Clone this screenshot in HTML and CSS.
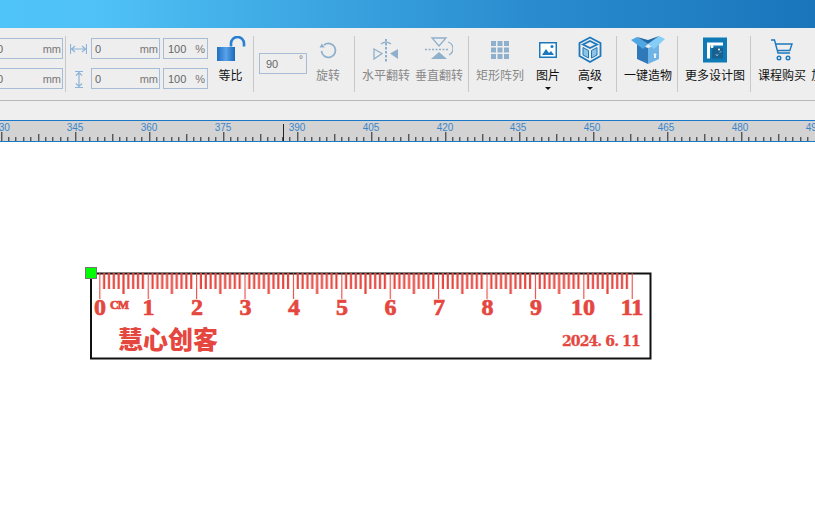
FILE: index.html
```html
<!DOCTYPE html>
<html lang="zh-CN">
<head>
  <meta charset="UTF-8" />
  <title>激光造物</title>
  <link rel="stylesheet" href="styles.css">
</head>
<body>
  <div class="titlebar"></div>

  <div class="toolbar">
    <div class="size-cut">
      <div class="field w-size"><span>0</span><span class="unit">mm</span></div>
      <div class="field w-size"><span>0</span><span class="unit">mm</span></div>
    </div>
    <div class="sep first"></div>

    <div class="axis">
      <svg width="17" height="12" viewBox="0 0 17 12" fill="none" stroke="#8db4d8" stroke-width="1.200"><path d="M.5 1v10M16.500 1v10M1 6h15M5 3 1.500 6 5 9M12 3l3.500 3L12 9"/></svg>
      <svg width="10" height="17" viewBox="0 0 10 17" fill="none" stroke="#8db4d8" stroke-width="1.200"><path d="M1 .5h8M1 16.500h8M5 1v15M2 4.500 5 1.500l3 3M2 12.500l3 3 3-3"/></svg>
    </div>
    <div class="field-col">
      <div class="field-row">
        <div class="field w-mm"><span>0</span><span class="unit">mm</span></div>
        <div class="field w-pct"><span>100</span><span class="unit">%</span></div>
      </div>
      <div class="field-row">
        <div class="field w-mm"><span>0</span><span class="unit">mm</span></div>
        <div class="field w-pct"><span>100</span><span class="unit">%</span></div>
      </div>
    </div>

    <div class="tool lock">
      <svg width="30" height="26" viewBox="0 0 30 26">
        <defs><linearGradient id="lockfill" x1="0" x2="1" y1="0" y2="0"><stop offset="0" stop-color="#1f6fc0"/><stop offset=".5" stop-color="#5aa2ea"/><stop offset="1" stop-color="#1a68b8"/></linearGradient></defs>
        <path d="M15 10V7a6.500 6.500 0 0 1 13 0v3" fill="none" stroke="#2a7fd0" stroke-width="2.600" transform="translate(0 -.5)"/>
        <rect x="1" y="10" width="18" height="14" fill="url(#lockfill)"/>
      </svg>
      <span class="label on">等比</span>
    </div>
    <div class="sep first"></div>

    <div class="field w-angle"><span>90</span><span class="unit deg">°</span></div>
    <div class="tool rotate">
      <svg width="20" height="20" viewBox="0 0 20 20" fill="none" stroke="#8fb0cc" stroke-width="1.800"><path d="M6 5a7 7 0 1 1-2.500 6"/><path d="M1.500 7.500 3.800 3.500 6.800 7.500z" fill="#8fb0cc" stroke="none"/></svg>
      <span class="label">旋转</span>
    </div>
    <div class="sep"></div>

    <div class="tool">
      <svg width="28" height="28" viewBox="0 0 28 28" fill="none" stroke="#8fb0cc" stroke-width="1.300"><path d="M14 3v24" stroke-width="2" stroke-dasharray="2.500 1.500"/><path d="M9 8a8 8 0 0 1 10 0"/><path d="M2 13l8 4.500L2 23z"/><path d="M26 13l-8 4.500 8 5.500z" fill="#8fb0cc" stroke="none"/></svg>
      <span class="label">水平翻转</span>
    </div>
    <div class="tool gap5">
      <svg width="28" height="28" viewBox="0 0 28 28" fill="none" stroke="#8fb0cc" stroke-width="1.300"><path d="M0 13.500h24" stroke-width="1.600" stroke-dasharray="2 1.500"/><path d="M7 2h14l-7 8z"/><path d="M14 16l8 7H6z" fill="#8fb0cc" stroke="none"/><path d="M23 6a7 7 0 0 1 1 13"/></svg>
      <span class="label">垂直翻转</span>
    </div>
    <div class="sep"></div>

    <div class="tool">
      <svg class="grid-icon" width="18" height="18" viewBox="0 0 18 18" fill="#8fb0cc"><path d="M0 0h5v5H0zM6.500 0h5v5h-5zM13 0h5v5h-5zM0 6.500h5v5H0zM6.500 6.500h5v5h-5zM13 6.500h5v5h-5zM0 13h5v5H0zM6.500 13h5v5h-5zM13 13h5v5h-5z"/></svg>
      <span class="label">矩形阵列</span>
    </div>
    <div class="tool img-tool">
      <svg width="18" height="28" viewBox="0 0 18 28"><rect x=".75" y="6.750" width="16.500" height="14.500" fill="#fff" stroke="#1b78bd" stroke-width="1.500"/><path d="M3 19l4-6 3 4 2-2 3 4z" fill="#1b78bd"/><circle cx="13" cy="10.500" r="1.500" fill="#1b78bd"/></svg>
      <span class="label on">图片</span>
      <i class="caret"></i>
    </div>
    <div class="tool adv-tool">
      <svg width="24" height="28" viewBox="0 0 24 28" fill="none" stroke="#1b78bd" stroke-width="1.800"><path d="M12 1.500 22.500 7v13L12 26 1.500 20V7z"/><path d="M12 5 19 8.500 12 12 5 8.500z"/><path d="M5 11.500l5.500 3V22L5 19zM19 11.500l-5.500 3V22L19 19z" fill="#8ec3e8" stroke-width="1"/></svg>
      <span class="label on">高级</span>
      <i class="caret"></i>
    </div>
    <div class="sep"></div>

    <div class="tool">
      <svg width="34" height="28" viewBox="0 0 34 28">
        <path d="M17 12 28 8v15l-11 5z" fill="#6fb4e6"/><path d="M6 8l11 4v16L6 23z" fill="#2f79ba"/>
        <path d="M0 4l6-3 11 7-5 5z" fill="#4ea6e2"/><path d="M34 3l-6-3-11 8 6 5z" fill="#86cdf8"/><path d="M6 1l11 7 11-8-11 4z" fill="#1f6aa8"/>
        <path d="M23 22v-3h-1l2-2 2 2h-1v3z" fill="#e8f3fb"/>
      </svg>
      <span class="label on">一键造物</span>
    </div>
    <div class="sep"></div>

    <div class="tool">
      <svg width="24" height="25" viewBox="0 0 24 25"><rect width="24" height="25" fill="#0f7ab5"/><path d="M4 5h16v3H7v13H4z" fill="#fff"/><path d="M9 10h11v11H9z" fill="#17608f"/><circle cx="9" cy="9" r="1.500" fill="#fff"/><circle cx="16" cy="12" r="1" fill="#fff"/><path d="M13 17l1 1 1-1M17 15l1-1" stroke="#fff" fill="none"/></svg>
      <span class="label on">更多设计图</span>
    </div>
    <div class="sep"></div>

    <div class="tool">
      <svg width="24" height="24" viewBox="0 0 24 24" fill="none" stroke="#1b78bd" stroke-width="1.400"><path d="M1 2h3.500L8 15h12"/><path d="M5.500 6H22l-2.200 6.500H7.500"/><circle cx="9" cy="20" r="1.800"/><circle cx="18" cy="20" r="1.800"/></svg>
      <span class="label on">课程购买</span>
    </div>
    <div class="tool gap5">
      <div class="blank-icon"></div>
      <span class="label on">加工</span>
    </div>
  </div>

  <div class="rule-gap"></div>

  <svg class="top-ruler" width="815" height="22" viewBox="0 0 815 20">
    <defs>
      <pattern id="ticks" x="1.300" y="0" width="74" height="20" patternUnits="userSpaceOnUse">
        <path d="M0 11v9M37 13v7M7.400 16v4M14.800 16v4M22.200 16v4M29.600 16v4M44.400 16v4M51.800 16v4M59.200 16v4M66.600 16v4" stroke="#222" stroke-width="1" fill="none" shape-rendering="crispEdges"/>
      </pattern>
    </defs>
    <rect width="815" height="20" fill="url(#ticks)"/>
    <path d="M283.500 3v17" stroke="#222"/>
    <g class="ruler-nums">
      <text x="1.500" y="10">330</text><text x="75" y="10">345</text><text x="149" y="10">360</text>
      <text x="223" y="10">375</text><text x="297" y="10">390</text><text x="371" y="10">405</text>
      <text x="445" y="10">420</text><text x="518" y="10">435</text><text x="592" y="10">450</text>
      <text x="666" y="10">465</text><text x="740" y="10">480</text><text x="814" y="10">495</text>
    </g>
  </svg>

  <div class="canvas">
    <svg class="work" width="580" height="100" viewBox="0 0 580 100">
      <defs>
        <pattern id="mm" x="14.300" y="0" width="48.400" height="40" patternUnits="userSpaceOnUse">
          <path d="M0 8v26M24.200 8v21" stroke="#e5473f" stroke-width="2.200" fill="none"/>
          <path d="M4.840 8v16M9.680 8v16M14.520 8v16M19.360 8v16M29.040 8v16M33.880 8v16M38.720 8v16M43.560 8v16" stroke="#e5473f" stroke-width="2.200" fill="none"/>
        </pattern>
      </defs>
      <rect x="6" y="8.500" width="559.500" height="85" fill="#fff" stroke="#111" stroke-width="2"/>
      <rect x="13" y="8" width="535" height="26" fill="url(#mm)"/>
      <g class="cm-nums">
        <text x="15" y="50">0</text><text x="63.500" y="50">1</text><text x="112" y="50">2</text><text x="160.500" y="50">3</text>
        <text x="209" y="50">4</text><text x="257" y="50">5</text><text x="305.500" y="50">6</text><text x="354" y="50">7</text>
        <text x="402.500" y="50">8</text><text x="451" y="50">9</text><text x="498" y="50">10</text><text x="547" y="50">11</text>
      </g>
      <text class="cm-mark" x="25" y="44">CM</text>
      <text class="brand" x="33" y="84">慧心创客</text>
      <text class="date" x="477" y="81">2024. 6. 11</text>
      <rect x="0.500" y="2.500" width="11" height="11" fill="#00ff00" stroke="#777"/>
    </svg>
  </div>
</body>
</html>
```

FILE: styles.css
```css
body {
  margin: 0;
  width: 815px;
  height: 510px;
  overflow: hidden;
  background: #fff;
  font-family: "Noto Sans CJK SC", "Liberation Sans", sans-serif;
}

.titlebar {
  height: 28px;
  background: linear-gradient(to right, #4ec4f8 0%, #50c1f6 12%, #3aa4e0 40%, #2a8ccf 65%, #1a75bb 100%);
}

.toolbar {
  display: flex;
  align-items: flex-start;
  height: 73px;
  box-sizing: border-box;
  padding-top: 8px;
  background: #eee;
  border-bottom: 1px solid #b8b8b8;
  overflow: hidden;
  white-space: nowrap;
}

.sep {
  flex: none;
  width: 1px;
  height: 56px;
  margin: 0 7px 0 5px;
  background: #c8c8c8;
}

.sep.first {
  margin: 0;
}

.size-cut {
  flex: none;
  display: flex;
  flex-direction: column;
  gap: 9px;
  width: 65px;
  padding-top: 2px;
  overflow: hidden;
}

.size-cut .field {
  margin-left: -7px;
}

.field {
  flex: none;
  display: flex;
  justify-content: space-between;
  align-items: center;
  box-sizing: border-box;
  height: 21px;
  padding: 0 1px 0 3px;
  border: 1px solid #a9bcd6;
  font: 11px "Liberation Sans", sans-serif;
  color: #666;
}

.unit {
  color: #777;
}

.w-size {
  width: 70px;
}

.w-mm {
  width: 69px;
}

.w-pct {
  width: 45px;
  padding: 0 2px 0 4px;
}

.w-angle {
  width: 48px;
  margin: 17px 0 0 5px;
  padding: 0 3px 0 6px;
}

.deg {
  align-self: flex-start;
  font-size: 10px;
}

.axis {
  flex: none;
  display: flex;
  flex-direction: column;
  align-items: center;
  justify-content: space-between;
  box-sizing: border-box;
  width: 25px;
  height: 52px;
  padding: 7px 0 0;
  gap: 14px;
}

.field-col {
  flex: none;
  display: flex;
  flex-direction: column;
  gap: 9px;
  padding-top: 2px;
}

.field-row {
  display: flex;
  gap: 3px;
}

.tool {
  flex: none;
  display: flex;
  flex-direction: column;
  align-items: center;
}

.tool svg {
  display: block;
  height: 28px;
}

.label {
  display: block;
  margin-top: 2px;
  font-size: 12px;
  line-height: 18px;
  color: #888;
}

.label.on {
  color: #111;
}

.lock {
  width: 45px;
}

.rotate {
  width: 42px;
}

.gap5 {
  margin-left: 5px;
}

.grid-icon {
  padding: 5px 0;
  box-sizing: content-box;
  height: 18px !important;
}

.img-tool {
  margin-left: 12px;
}

.adv-tool {
  margin-left: 18px;
  margin-right: 9px;
}

.caret {
  width: 0;
  height: 0;
  margin-top: 3px;
  border-left: 3px solid transparent;
  border-right: 3px solid transparent;
  border-top: 3px solid #111;
}

.blank-icon {
  height: 28px;
}

.rule-gap {
  height: 19px;
  background: #efefef;
}

.top-ruler {
  display: block;
  background: #d3d3d3;
  border-top: 1px solid #1b78c8;
  border-bottom: 1px solid #1b78c8;
  box-sizing: border-box;
}

.ruler-nums text {
  font: 10px "Liberation Sans", sans-serif;
  fill: #3a85c9;
  text-anchor: middle;
}

.canvas {
  padding: 123px 0 0 85px;
}

.work {
  display: block;
}

.cm-nums text {
  font: bold 24px "Liberation Serif", serif;
  fill: #e5473f;
  stroke: #e5473f;
  stroke-width: 0.7px;
  text-anchor: middle;
}

.cm-mark {
  font: 900 12px "Liberation Serif", serif;
  fill: #e5473f;
  stroke: #e5473f;
  stroke-width: 0.7px;
  letter-spacing: -1px;
}

.brand {
  font: 900 25px "Noto Sans CJK SC", sans-serif;
  fill: #e5473f;
}

.date {
  font: bold 14px "DejaVu Serif", serif;
  fill: #e5473f;
  stroke: #e5473f;
  stroke-width: 0.3px;
  letter-spacing: -0.9px;
}
```
